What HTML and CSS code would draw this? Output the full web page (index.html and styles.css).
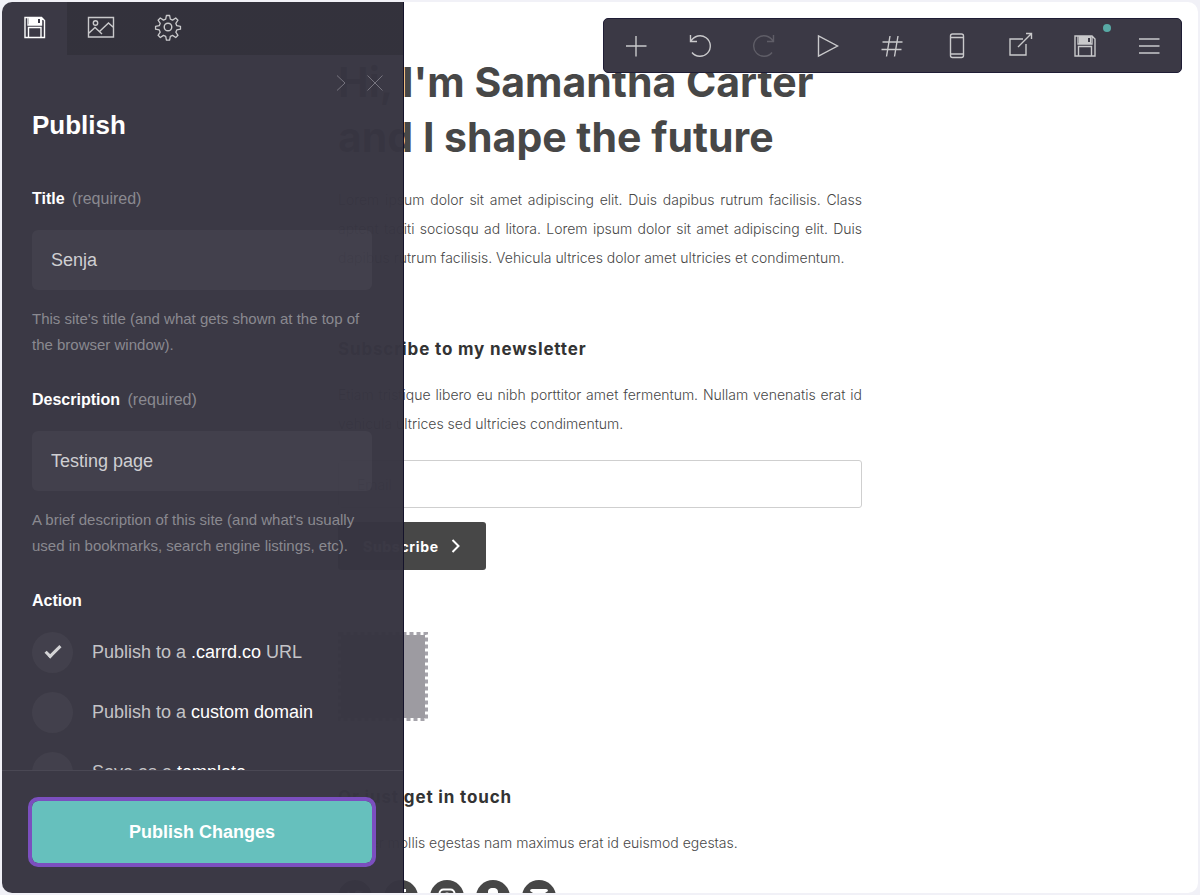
FILE: index.html
```html
<!DOCTYPE html>
<html lang="en">
<head>
<meta charset="UTF-8">
<meta name="viewport" content="width=device-width, initial-scale=1.0">
<title>Senja</title>
<link rel="stylesheet" href="styles.css">
</head>
<body>
<div class="frame">

  <!-- Site being edited -->
  <main class="site">
    <h1>Hi, I'm Samantha Carter and I shape the future</h1>
    <p class="intro">Lorem ipsum dolor sit amet adipiscing elit. Duis dapibus rutrum facilisis. Class aptent taciti sociosqu ad litora. Lorem ipsum dolor sit amet adipiscing elit. Duis dapibus rutrum facilisis. Vehicula ultrices dolor amet ultricies et condimentum.</p>

    <h2>Subscribe to my newsletter</h2>
    <p>Etiam tristique libero eu nibh porttitor amet fermentum. Nullam venenatis erat id vehicula ultrices sed ultricies condimentum.</p>
    <form class="signup">
      <input type="email" placeholder="Email" aria-label="Email">
      <button type="button">Subscribe
        <svg width="10" height="14" viewBox="0 0 10 14" fill="none" stroke="currentColor" stroke-width="2"><path d="M1.5 1l6 6-6 6"/></svg>
      </button>
    </form>

    <svg class="embed" width="90" height="89" viewBox="0 0 90 89">
      <rect width="90" height="89" fill="#fff"/>
      <rect x="3" y="3" width="84" height="83" fill="#9d9ba1"/>
      <rect x="1.5" y="1.5" width="87" height="86" fill="none" stroke="#a5a3aa" stroke-width="3" stroke-dasharray="4 3"/>
    </svg>

    <h2>Or just get in touch</h2>
    <p>Integer mollis egestas nam maximus erat id euismod egestas.</p>
    <div class="social">
      <a href="#" aria-label="Twitter"><svg width="18" height="18" viewBox="0 0 18 18"><path d="M1 14c6 3 14 0 14-9l2-2-3 .5C11 1 8 4 9 6 6 6 3 5 2 3c-1 3 0 5 2 6l-2-.5c0 2 2 3 3 3.5z" fill="#fff"/></svg></a>
      <a href="#" aria-label="Facebook"><svg width="18" height="18" viewBox="0 0 18 18"><path d="M8 18v-7H5V8h3V5c0-3 2-4 6-4v3c-2 0-3 0-3 2v2h3l-1 3h-2v7z" fill="#fff"/></svg></a>
      <a href="#" aria-label="Instagram"><svg width="18" height="18" viewBox="0 0 18 18" fill="none" stroke="#fff" stroke-width="2"><rect x="1.5" y="1.5" width="15" height="15" rx="4"/><circle cx="9" cy="9" r="3.5"/></svg></a>
      <a href="#" aria-label="Snapchat"><svg width="18" height="18" viewBox="0 0 18 18"><path d="M9 0c4 0 5 2 5 4v4l3 1-2 5-3 1-3 2-3-2-3-1-2-5 3-1V4c0-2 1-4 5-4z" fill="#fff"/></svg></a>
      <a href="#" aria-label="Email"><svg width="18" height="18" viewBox="0 0 18 18"><path d="M0 3q0-2 2-2h14q2 0 2 2l-9 6zM0 6l9 6 9-6v9H0z" fill="#fff"/></svg></a>
    </div>
  </main>

  <!-- Toolbar -->
  <nav class="toolbar" aria-label="Editor">
    <button type="button" aria-label="Add"><svg width="28" height="28" viewBox="0 0 28 28"><path d="M14 4v20.5M4 14h20.5"/></svg></button>
    <button type="button" aria-label="Undo"><svg width="28" height="28" viewBox="0 0 28 28"><path d="M4.500 3v6.500H11M5 9A10.300 10.300 0 1 1 6 20.500"/></svg></button>
    <button type="button" aria-label="Redo" disabled><svg width="28" height="28" viewBox="0 0 28 28"><path d="M23.500 3v6.500H17M23 9A10.300 10.300 0 1 0 22 20.500"/></svg></button>
    <button type="button" aria-label="Preview"><svg width="28" height="28" viewBox="0 0 28 28"><path d="M4.5 4v20l19-10z"/></svg></button>
    <button type="button" aria-label="Grid"><svg width="28" height="28" viewBox="0 0 28 28"><path d="M12 4L8.5 24.5M20 4l-3.5 20.500M4.500 10h20M3.500 17.500h20"/></svg></button>
    <button type="button" aria-label="Mobile view"><svg width="28" height="28" viewBox="0 0 28 28"><rect x="7.5" y="2" width="13" height="23.5" rx="2"/><path d="M7.5 5.500h13M7.500 22h13"/></svg></button>
    <button type="button" aria-label="Open"><svg width="28" height="28" viewBox="0 0 28 28"><path d="M19 12v11H3V7h13M11 15L24.500 1.500M19 1.500h5.500V7"/></svg></button>
    <button type="button" aria-label="Publish" class="changed">
      <svg width="28" height="28" viewBox="0 0 28 28"><path d="M4 4h17l3 3v17H4zM7 4v8h14V4M7.500 24V14.500h13V24"/><path class="solid" d="M8 4h12v8H8zM17 6h2v4h-2z"/></svg>
    </button>
    <button type="button" aria-label="Menu"><svg width="28" height="28" viewBox="0 0 28 28"><path d="M4 7h20.500M4 14h20.500M4 21h20.500"/></svg></button>
  </nav>

  <!-- Publish panel -->
  <aside class="panel">
    <div class="tabs">
      <button type="button" class="active" aria-label="Publish"><svg width="28" height="28" viewBox="0 0 28 28"><path d="M4 4.500h16.500l3 3v17H4zM7 4.500V12h13.500V4.500M7.500 24.500v-10h12.500v10"/><path class="solid" d="M8 5h12v7H8zM17 6h2v4h-2z"/></svg></button>
      <button type="button" aria-label="Background"><svg width="28" height="28" viewBox="0 0 28 28"><path d="M1.5 4.5h25V24h-25zM1.500 20.500l6.500-6 7 6.500M12.500 18.500l9-8.500 5 4.500"/><circle cx="8.5" cy="10" r="2.2"/></svg></button>
      <button type="button" aria-label="Settings"><svg width="28" height="28" viewBox="0 0 28 28"><path d="M12.3 1.600h3.400l.8 4 2.400 1 3.400-2.300 2.400 2.400-2.300 3.400 1 2.400 4 .8v3l-4 .8-1 2.400 2.300 3.400-2.400 2.400-3.400-2.300-2.400 1-.8 4h-3.400l-.8-4-2.400-1-3.400 2.300-2.400-2.400 2.300-3.400-1-2.400-4-.8v-3l4-.8 1-2.400-2.300-3.400 2.400-2.400 3.400 2.300 2.400-1z" stroke-linejoin="round" transform="translate(1 1) scale(.93)"/><circle cx="14" cy="14" r="3.8"/></svg></button>
    </div>

    <form class="fields" id="publishForm">
      <div class="controls">
        <button type="button" aria-label="Collapse"><svg width="18" height="18" viewBox="0 0 18 18"><path d="M5 1.500l8 7.500-8 7.500"/></svg></button>
        <button type="button" aria-label="Close"><svg width="18" height="18" viewBox="0 0 18 18"><path d="M1.500 1.500l15 15M16.500 1.500l-15 15"/></svg></button>
      </div>
      <h2>Publish</h2>

      <div class="field">
        <label for="siteTitle">Title <span>(required)</span></label>
        <input type="text" id="siteTitle" value="Senja">
        <p>This site's title (and what gets shown at the top of the browser window).</p>
      </div>

      <div class="field">
        <label for="siteDescription">Description <span>(required)</span></label>
        <input type="text" id="siteDescription" value="Testing page">
        <p>A brief description of this site (and what's usually used in bookmarks, search engine listings, etc).</p>
      </div>

      <fieldset>
        <legend>Action</legend>
        <label><input type="radio" name="action" checked><span>Publish to a <b>.carrd.co</b> URL</span></label>
        <label><input type="radio" name="action"><span>Publish to a <b>custom domain</b></span></label>
        <label><input type="radio" name="action"><span>Save as a <b>template</b></span></label>
      </fieldset>
    </form>

    <div class="actions">
      <button type="button" class="publish">Publish Changes</button>
    </div>
  </aside>

</div>
</body>
</html>
```

FILE: styles.css
```css
:root {
  --panel: rgba(55,53,65,0.98);
  --field: rgba(255,255,255,0.04);
  --teal: #66c0bd;
  --purple: #7b4fbf;
  --dark: #474747;
}

* {box-sizing:border-box;}

body {
  margin:0;
  background:#f1f1f7;
  font-family:"Liberation Sans", Arial, sans-serif;
}

button {padding:0; border:0; background:none; font:inherit; color:inherit; cursor:pointer;}

.frame {
  position:relative;
  height:100vh;
  overflow:hidden;
  background:#fff;
  border:2px solid #f1f1f7;
  border-radius:12px;
}

/* Site */
.site {
  max-width:524px;
  margin:0 auto;
  padding-top:53px;
  font-family:Inter, sans-serif;
  color:var(--dark);
}
.site h1 {margin:0 0 20px; font-size:41px; line-height:55px; font-weight:700;}
.site h2 {margin:0 0 17px; font-size:17px; line-height:27px; font-weight:700; letter-spacing:0.05em; color:#333;}
.site p {margin:0 0 22px; font-size:14px; line-height:29px; font-weight:300; text-align:justify;}
.site .intro {margin-bottom:64px;}

.signup input {
  display:block;
  width:100%; height:48px;
  padding:0 18px;
  border:1px solid #cfcfcf; border-radius:3px;
  font:300 14px Inter, sans-serif;
}
.signup button {
  display:flex; align-items:center; justify-content:center; gap:12px;
  width:148px; height:48px;
  margin-top:14px;
  background:var(--dark);
  color:#fff;
  border-radius:3px;
  font-size:14px; font-weight:700; letter-spacing:0.05em;
}
.embed {display:block; margin:62px 0 63px;}

.social {display:flex; gap:12px; margin-top:23px;}
.social a {
  display:flex; align-items:center; justify-content:center;
  width:34px; height:34px;
  border-radius:50%;
  background:var(--dark);
}

/* Toolbar */
.toolbar {
  position:absolute; top:16px; right:16px;
  display:flex;
  width:579px; max-width:100%;
  height:55px;
  background:#3b3945;
  border:1px solid #1f1d35;
  border-radius:5px;
}
.toolbar button {
  flex:1;
  display:flex; align-items:center; justify-content:center;
  position:relative;
}
.toolbar svg, .tabs svg, .controls svg {fill:none; stroke:#c9c9cb; stroke-width:1.4;}
.toolbar button:disabled {opacity:0.25;}
.toolbar .solid, .tabs .solid {fill:#c9c9cb; fill-rule:evenodd; stroke:none;}
.changed::after {
  content:"";
  position:absolute; top:5px; right:6px;
  width:8px; height:8px;
  border-radius:50%;
  background:#58aaa5;
}

/* Panel */
.panel {
  position:absolute; top:0; bottom:0; left:0;
  display:flex; flex-direction:column;
  width:402px; max-width:100%;
  background:var(--panel);
  border-right:1px solid #15132b;
  color:#fff;
}
.tabs {display:flex; background:linear-gradient(rgba(0,0,0,0.13), rgba(0,0,0,0.13)) no-repeat 65px 0;}
.tabs button {
  display:flex; align-items:center; justify-content:center;
  width:67px; height:53px;
  padding-bottom:3px;
}
.tabs button.active {width:65px;}
.tabs .active svg {stroke:#fff;}
.tabs .active .solid {fill:#fff;}

.fields {
  flex:1; min-height:0;
  overflow:hidden;
  padding:16px 31px 0 30px;
}
.controls {display:flex; justify-content:flex-end; gap:16px; height:24px; margin-right:-12px;}
.controls button {display:flex; align-items:center;}
.controls svg {stroke:#77757f; stroke-width:1;}
.fields h2 {margin:14px 0 46px; font-size:26px; line-height:32px;}

.field {margin-bottom:30px;}
.field label, .fields legend {
  display:block;
  margin-bottom:19px;
  padding:0;
  font-size:16px; line-height:24px; font-weight:700;
}
.field label span {font-weight:400; color:#8a8990; margin-left:3px;}
.field input {
  display:block;
  width:100%; height:60px;
  padding:0 19px;
  border:0; border-radius:6px;
  background:var(--field);
  color:#cfcfd2;
  font:18px "Liberation Sans", Arial, sans-serif;
}
.field p {margin:16px 0 0; font-size:15px; line-height:26px; color:#8a8990;}

fieldset {margin:0; padding:0; border:0;}
fieldset label {
  display:flex; align-items:center; gap:19px;
  height:41px;
  margin-bottom:19px;
  font-size:18px;
  color:#c4c4c7;
}
fieldset b {font-weight:400; color:#fff;}
fieldset input {
  appearance:none;
  display:flex; justify-content:center;
  width:41px; height:41px;
  margin:0;
  border-radius:50%;
  background:var(--field);
}
fieldset input:checked::before {
  content:"";
  width:5px; height:13px;
  margin-top:10px;
  border:solid #d4d4d6;
  border-width:0 3px 3px 0;
  transform:rotate(45deg);
}

.actions {padding:30px 31px 30px 30px; border-top:1px solid #4a4854;}
.publish {
  display:block;
  width:100%; height:62px;
  border-radius:6px;
  outline:4px solid var(--purple);
  background:var(--teal);
  color:#fff;
  font-size:18px; font-weight:700;
}
```
